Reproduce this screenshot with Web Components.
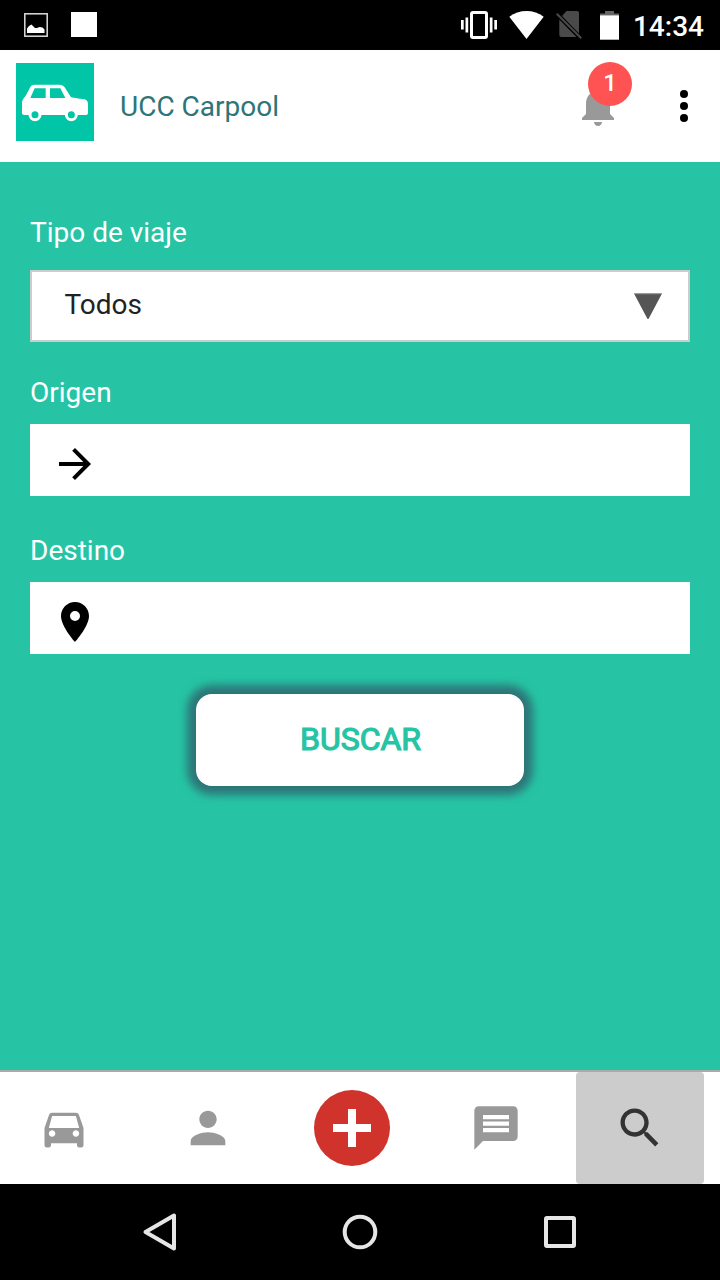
<!DOCTYPE html>
<html lang="es">
<head>
<meta charset="utf-8">
<title>UCC Carpool</title>
<style>
  body {
    margin: 0;
    font-family: Roboto, sans-serif;
  }
</style>
</head>
<body>
<carpool-app></carpool-app>

<script>
const ICONS = {
  picture: `<svg width="24" height="24" viewBox="0 0 24 24"><rect x=".8" y=".8" width="22.4" height="22.4" fill="none" stroke="#ddd" stroke-width="1.5"/><path fill="#fff" d="M3 20v-4.500l2-2.500 2.500-1.500 3.500 3.500h2l2.500-1 3 .5 2 2v3.500z"/></svg>`,
  square: `<svg width="26" height="25" viewBox="0 0 26 25"><path fill="#fff" d="M0 0h26v25H0z"/></svg>`,
  vibrate: `<svg width="36" height="28" viewBox="0 0 36 28"><rect x="10.500" y="1.500" width="15" height="25" rx="1.500" fill="none" stroke="#fff" stroke-width="3"/><path fill="#fff" d="M0 9h2.700v9.500H0zM4.500 6.500h2.700v15H4.500zM28.800 6.500h2.700v15h-2.700zM33.300 9H36v9.500h-2.700z"/></svg>`,
  wifi: `<svg width="35" height="28" viewBox="0 0 35 28"><path fill="#fff" d="M17.500 28L.3 5.800C5.200 2 11.200 0 17.500 0s12.300 2 17.200 5.800z"/></svg>`,
  nosim: `<svg width="26" height="28" viewBox="0 0 26 28"><path fill="#4a4a4a" d="M10.500 0H21a2 2 0 0 1 2 2v20.500L6 5zM3.300 8.500L20.500 26H5.300a2 2 0 0 1-2-2z"/><path stroke="#4a4a4a" stroke-width="2" d="M.7 2.700l24.500 24.500"/></svg>`,
  battery: `<svg width="19" height="29" viewBox="0 0 19 29"><path fill="#666" d="M5 0h9v2.500h5v2H0v-2h5z"/><path fill="#fff" d="M0 4.300h19V28.700H0z"/></svg>`,
  logo: `<svg width="78" height="78" viewBox="0 0 234 234"><path fill="#00c6a7" d="M0 0h234v234H0z"/><path fill="#fff" fill-rule="evenodd" d="M18 151v-34q1-5 5-11l7-9 13-25q3-7 13-7h76q9 0 14 8l19 30 27 4 14 2q10 4 10 14v26q0 7-8 7H25q-7 0-7-5zM56 76h33v29H43zM102 76h31l15 29h-46z"/><g fill="#00c6a7" stroke="#fff" stroke-width="9"><circle cx="57" cy="155" r="15"/><circle cx="166" cy="155" r="15"/></g></svg>`,
  bell: `<svg width="48" height="48" viewBox="0 0 24 24"><path d="M12 22c1.100 0 2-.9 2-2h-4c0 1.100.9 2 2 2zm6-6v-5c0-3.070-1.640-5.640-4.500-6.320V4c0-.83-.67-1.500-1.500-1.500s-1.500.67-1.500 1.500v.68C7.630 5.360 6 7.920 6 11v5l-2 2v1h16v-1l-2-2z"/></svg>`,
  more: `<svg width="48" height="48" viewBox="0 0 24 24"><circle cx="12" cy="6" r="2"/><circle cx="12" cy="12" r="2"/><circle cx="12" cy="18" r="2"/></svg>`,
  down: `<svg width="28" height="27" viewBox="0 0 28 27"><path fill="#555" d="M0 .5h28L14.500 26h-1z"/><path fill="#999" d="M0 0h28l-.6 1.200H.6z"/></svg>`,
  arrow: `<svg width="48" height="48" viewBox="0 0 24 24"><path d="M12 4l-1.410 1.410L16.170 11H4v2h12.170l-5.580 5.590L12 20l8-8z"/></svg>`,
  place: `<svg width="48" height="48" viewBox="0 0 24 24"><path d="M12 2C8.130 2 5 5.130 5 9c0 5.250 7 13 7 13s7-7.750 7-13c0-3.870-3.130-7-7-7zm0 9.500a2.500 2.500 0 0 1 0-5 2.500 2.500 0 0 1 0 5z"/></svg>`,
  car: `<svg width="52" height="52" viewBox="0 0 24 24"><path d="M18.920 6.010C18.720 5.420 18.160 5 17.500 5h-11c-.66 0-1.210.42-1.420 1.010L3 12v8c0 .55.45 1 1 1h1c.55 0 1-.45 1-1v-1h12v1c0 .55.45 1 1 1h1c.55 0 1-.45 1-1v-8l-2.080-5.990zM6.500 16c-.83 0-1.500-.67-1.500-1.500S5.670 13 6.500 13s1.500.67 1.500 1.500S7.330 16 6.500 16zm11 0c-.83 0-1.500-.67-1.500-1.500s.67-1.500 1.500-1.500 1.500.67 1.500 1.500-.67 1.500-1.500 1.500zM5 12l1.500-5.500h11L19 12H5z"/></svg>`,
  person: `<svg width="52" height="52" viewBox="0 0 24 24"><path d="M12 12c2.210 0 4-1.790 4-4s-1.790-4-4-4-4 1.790-4 4 1.790 4 4 4zm0 2c-2.670 0-8 1.340-8 4v2h16v-2c0-2.660-5.330-4-8-4z"/></svg>`,
  plus: `<svg width="38" height="38" viewBox="0 0 38 38"><path d="M15 0h8v15h15v8H23v15h-8V23H0v-8h15z"/></svg>`,
  message: `<svg width="52" height="52" viewBox="0 0 24 24"><path d="M20 2H4c-1.100 0-2 .9-2 2v18l4-4h14c1.100 0 2-.9 2-2V4c0-1.100-.9-2-2-2zm-2 12H6v-2h12v2zm0-3H6V9h12v2zm0-3H6V6h12v2z"/></svg>`,
  search: `<svg width="52" height="52" viewBox="0 0 24 24"><path d="M15.500 14h-.79l-.28-.27C15.410 12.590 16 11.110 16 9.500 16 5.910 13.090 3 9.500 3S3 5.910 3 9.500 5.910 16 9.500 16c1.610 0 3.090-.59 4.230-1.570l.27.28v.79l5 4.990L20.490 19l-4.990-5zm-6 0C7.010 14 5 11.990 5 9.500S7.010 5 9.500 5 14 7.010 14 9.500 11.990 14 9.500 14z"/></svg>`,
  back: `<svg width="40" height="40" viewBox="0 0 40 40"><path fill="none" stroke="#e6e6e6" stroke-width="4" stroke-linejoin="round" d="M34 3.500v33L5.500 20z"/></svg>`,
  home: `<svg width="40" height="40" viewBox="0 0 40 40"><circle cx="20" cy="20" r="15.300" fill="none" stroke="#e6e6e6" stroke-width="4"/></svg>`,
  recent: `<svg width="40" height="40" viewBox="0 0 40 40"><rect x="6" y="6" width="28" height="28" rx="1" fill="none" stroke="#e6e6e6" stroke-width="4"/></svg>`,
};

class AppIcon extends HTMLElement {
  constructor() {
    super();
    this.attachShadow({ mode: "open" });
  }

  connectedCallback() {
    this.shadowRoot.innerHTML = `
      <style>
        :host { display: block; flex: none; }
        svg { display: block; fill: currentColor; }
      </style>
      ${ICONS[this.getAttribute("name")]}`;
  }
}

class StatusBar extends HTMLElement {
  constructor() {
    super();
    this.attachShadow({ mode: "open" });
    this.shadowRoot.innerHTML = `
      <style>
        :host {
          display: flex;
          justify-content: space-between;
          box-sizing: border-box;
          height: 50px;
          padding: 0 16px 0 24px;
          background: #000;
          color: #fff;
        }
        div { display: flex; align-items: center; }
        .left { gap: 23px; padding-bottom: 1px; }
        .right { gap: 12px; }
        .battery { margin: 0 2px 0 6px; }
        time { font-size: 28px; font-weight: 500; line-height: 34px; padding-top: 3px; }
      </style>
      <div class="left">
        <app-icon name="picture"></app-icon>
        <app-icon name="square"></app-icon>
      </div>
      <div class="right">
        <app-icon name="vibrate"></app-icon>
        <app-icon name="wifi"></app-icon>
        <app-icon name="nosim"></app-icon>
        <app-icon class="battery" name="battery"></app-icon>
        <time>14:34</time>
      </div>`;
  }
}

class AppHeader extends HTMLElement {
  constructor() {
    super();
    this.attachShadow({ mode: "open" });
    this.shadowRoot.innerHTML = `
      <style>
        :host {
          display: flex;
          align-items: center;
          box-sizing: border-box;
          height: 112px;
          padding: 0 12px 0 16px;
          background: #fff;
        }
        .logo { align-self: flex-start; margin-top: 13px; }
        h1 {
          flex: 1;
          margin: 0 0 0 26px;
          padding-top: 2px;
          font-size: 28px;
          font-weight: 400;
          line-height: 32px;
          color: #2d7577;
        }
        .bell { position: relative; margin-right: 38px; color: #999; }
        .badge {
          position: absolute;
          left: 14px;
          top: -20px;
          width: 44px;
          height: 44px;
          border-radius: 50%;
          background: #ff5252;
          color: #fff;
          font-size: 24px;
          font-weight: 500;
          line-height: 43px;
          text-align: center;
        }
      </style>
      <app-icon class="logo" name="logo"></app-icon>
      <h1><slot></slot></h1>
      <div class="bell">
        <app-icon name="bell"></app-icon>
        <span class="badge">1</span>
      </div>
      <app-icon name="more"></app-icon>`;
  }
}

class FormField extends HTMLElement {
  constructor() {
    super();
    this.attachShadow({ mode: "open" });
  }

  connectedCallback() {
    this.shadowRoot.innerHTML = `
      <style>
        :host { display: block; }
        label {
          display: block;
          margin-bottom: 15px;
          padding-top: 1px;
          font-size: 28px;
          line-height: 32px;
          color: #fff;
        }
        .box {
          display: flex;
          box-sizing: border-box;
          height: 72px;
          padding: 16px 20px 8px 20.5px;
          background: #fff;
        }
        :host([select]) label { margin-bottom: 21px; }
        :host([select]) .box {
          justify-content: space-between;
          align-items: center;
          padding: 0 26px 0 32.5px;
          border: 2px solid #ccc;
          font-size: 28px;
          line-height: 32px;
          color: #222;
        }
        :host([select]) .value { padding-bottom: 3px; }
      </style>
      <label>${this.getAttribute("label")}</label>
      <div class="box"><span class="value"><slot></slot></span><slot name="icon"></slot></div>`;
  }
}

class SearchButton extends HTMLElement {
  constructor() {
    super();
    this.attachShadow({ mode: "open" });
    this.shadowRoot.innerHTML = `
      <style>
        :host { display: block; }
        button {
          display: block;
          width: 328px;
          height: 92px;
          margin: 0 auto;
          padding: 0 0 3px 1px;
          border: none;
          border-radius: 16px;
          background: #fff;
          box-shadow: 0 0 8px 9px #2d7577;
          color: #26c4a5;
          font: 400 32px Roboto, sans-serif;
          -webkit-text-stroke: 1.2px #26c4a5;
        }
      </style>
      <button><slot></slot></button>`;
  }
}

class TabBar extends HTMLElement {
  constructor() {
    super();
    this.attachShadow({ mode: "open" });
    this.shadowRoot.innerHTML = `
      <style>
        :host {
          display: flex;
          gap: 16px;
          height: 112px;
          border-top: 2px solid #aaa;
          background: #fff;
          color: #999;
        }
        .tab {
          display: flex;
          align-items: center;
          justify-content: center;
          width: 128px;
        }
        .active { border-radius: 4px; background: #ccc; color: #333; }
        .add {
          padding: 19px;
          border-radius: 50%;
          background: #cf332b;
          color: #fff;
        }
      </style>
      <div class="tab"><app-icon name="car"></app-icon></div>
      <div class="tab"><app-icon name="person"></app-icon></div>
      <div class="tab"><app-icon class="add" name="plus"></app-icon></div>
      <div class="tab"><app-icon name="message"></app-icon></div>
      <div class="tab active"><app-icon name="search"></app-icon></div>`;
  }
}

class NavBar extends HTMLElement {
  constructor() {
    super();
    this.attachShadow({ mode: "open" });
    this.shadowRoot.innerHTML = `
      <style>
        :host {
          display: flex;
          align-items: center;
          justify-content: center;
          gap: 160px;
          height: 96px;
          background: #000;
        }
      </style>
      <app-icon name="back"></app-icon>
      <app-icon name="home"></app-icon>
      <app-icon name="recent"></app-icon>`;
  }
}

class CarpoolApp extends HTMLElement {
  constructor() {
    super();
    this.attachShadow({ mode: "open" });
    this.shadowRoot.innerHTML = `
      <style>
        :host {
          display: flex;
          flex-direction: column;
          width: 720px;
          height: 1280px;
        }
        main {
          flex: 1;
          padding: 54px 30px 0;
          background: #26c4a5;
        }
        .origin { margin-top: 34px; }
        .destination { margin-top: 38px; }
        search-button { margin-top: 40px; }
      </style>
      <status-bar></status-bar>
      <app-header>UCC Carpool</app-header>
      <main>
        <form-field label="Tipo de viaje" select>Todos<app-icon slot="icon" name="down"></app-icon></form-field>
        <form-field class="origin" label="Origen"><app-icon slot="icon" name="arrow"></app-icon></form-field>
        <form-field class="destination" label="Destino"><app-icon slot="icon" name="place"></app-icon></form-field>
        <search-button>BUSCAR</search-button>
      </main>
      <tab-bar></tab-bar>
      <nav-bar></nav-bar>`;
  }
}

customElements.define("app-icon", AppIcon);
customElements.define("status-bar", StatusBar);
customElements.define("app-header", AppHeader);
customElements.define("form-field", FormField);
customElements.define("search-button", SearchButton);
customElements.define("tab-bar", TabBar);
customElements.define("nav-bar", NavBar);
customElements.define("carpool-app", CarpoolApp);
</script>
</body>
</html>
